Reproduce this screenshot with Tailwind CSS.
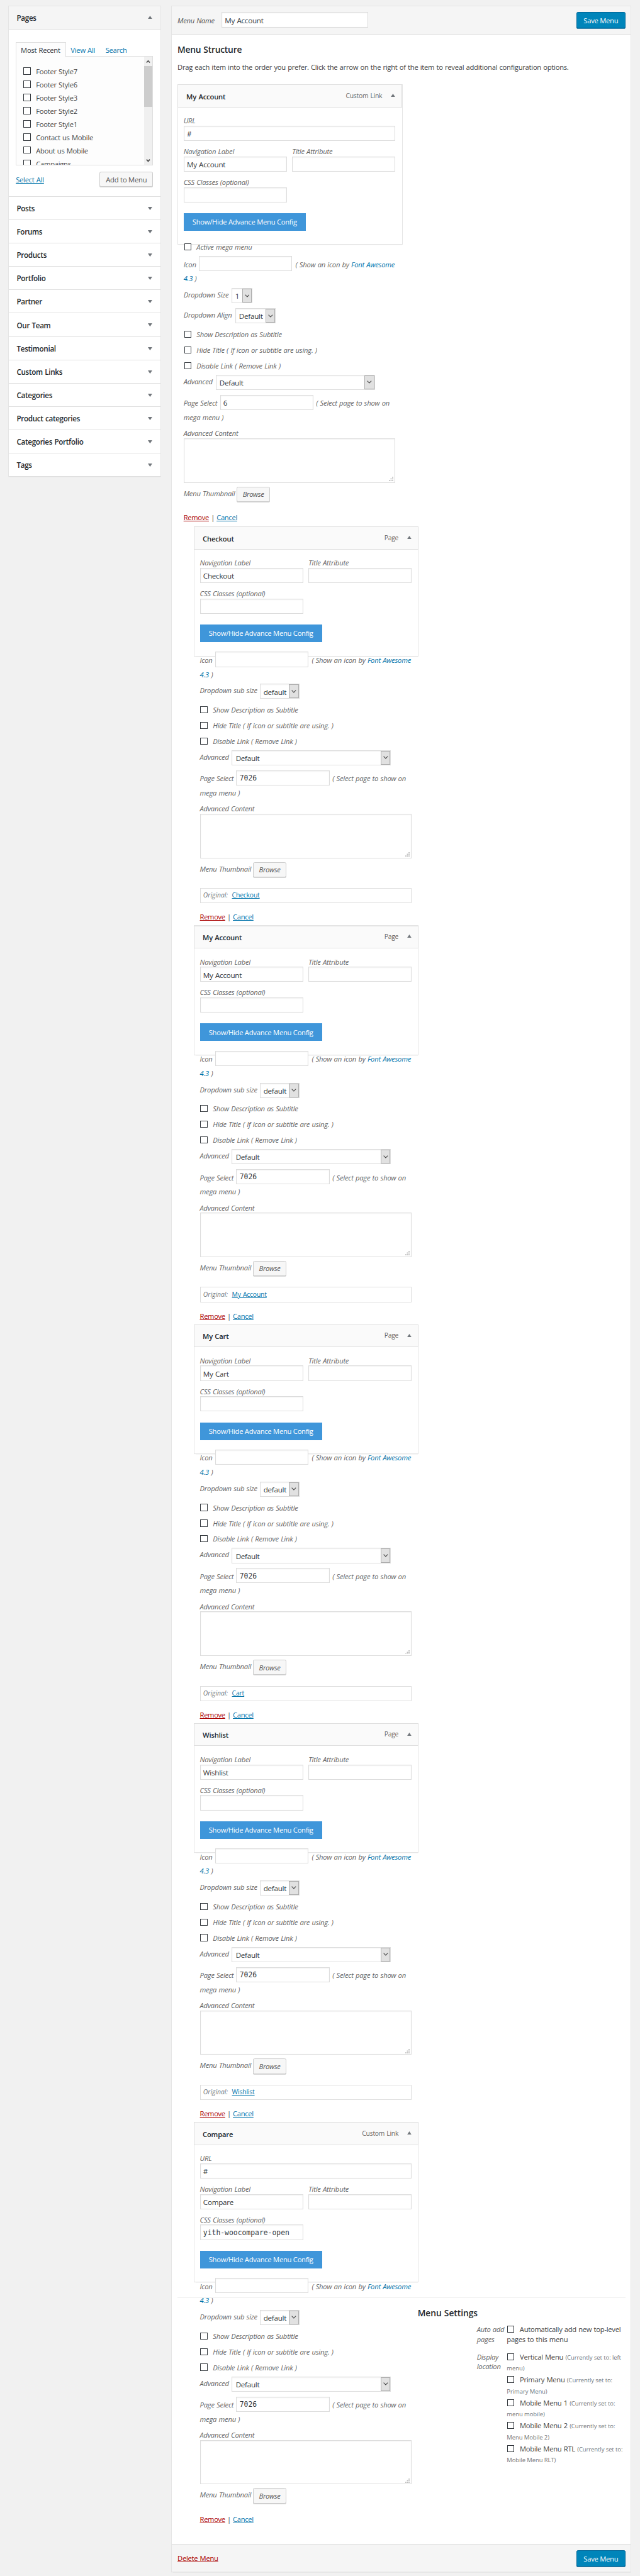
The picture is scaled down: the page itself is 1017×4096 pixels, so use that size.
<!DOCTYPE html>
<html lang="en">
<head>
<meta charset="utf-8">
<title>Menus</title>
<script src="https://cdn.jsdelivr.net/npm/@tailwindcss/browser@4"></script>
</head>
<body class="bg-[#f1f1f1] overflow-x-hidden">
<div class="[zoom:0.8635] relative h-[4743px] w-[1177px] overflow-hidden pl-[15px] pt-[10px] flex items-start gap-[19.5px] font-['Open_Sans',sans-serif] text-[13px] leading-[18px] tracking-[-0.3px] [word-spacing:0.7px] text-[#444]">

  <aside id="sidebar" class="w-[281px] shrink-0 bg-white border border-[#e5e5e5] shadow-[0_1px_1px_rgba(0,0,0,.04)]">
    <div class="h-[43px] bg-[#f5f5f5] border-b border-[#dfdfdf] flex items-center justify-between pl-[14.5px] pr-[15px]">
      <h3 class="text-[13.5px] font-semibold tracking-[-0.35px] text-[#23282d] mt-[2px]">Pages</h3>
      <svg class="w-[8px] h-[6px]" viewBox="0 0 8 6"><path d="M4 0L8 6H0z" fill="#72777c"/></svg>
    </div>
    <div class="h-[307px] px-[13px] pt-[24px]">
      <div class="flex h-[26px] items-stretch">
        <div class="w-[92px] h-[27px] relative z-10 bg-[#fdfdfd] border border-b-0 border-[#dfdfdf] pl-[8px] pt-[4px] text-[#32373c]">Most Recent</div>
        <div class="pl-[9px] pt-[5px] w-[73px] text-[#0073aa]">View All</div>
        <div class="pt-[5px] text-[#0073aa]">Search</div>
      </div>
      <div class="h-[202px] -mt-[1px] bg-[#fdfdfd] border border-[#dfdfdf] flex overflow-hidden">
        <div id="pages" class="grow pl-[13px] pt-[14.5px]"></div>
        <div class="w-[16px] bg-[#f0f0f0] pr-[1px] flex flex-col">
          <svg class="w-[15px] h-[17px]" viewBox="0 0 15 17"><path d="M4.5 11L7.5 7.8L10.5 11" fill="none" stroke="#505050" stroke-width="2"/></svg>
          <div class="h-[76px] bg-[#cdcdcd]"></div>
          <svg class="w-[15px] h-[17px] mt-auto" viewBox="0 0 15 17"><path d="M4.5 6.5L7.5 9.7L10.5 6.5" fill="none" stroke="#505050" stroke-width="2"/></svg>
        </div>
      </div>
      <div class="mt-[11px] flex items-center justify-between">
        <a class="mt-[2px] text-[#0073aa] underline">Select All</a>
        <button class="h-[28px] w-[98.5px] rounded-[3px] bg-[#f7f7f7] border border-[#ccc] shadow-[0_1px_0_#ccc] text-[#555] tracking-[-0.25px] pt-[1px]">Add to Menu</button>
      </div>
    </div>
    <div id="panels" class="border-t border-[#dfdfdf] -mb-[1px]"></div>
  </aside>

  <main class="relative w-[846px] h-[4727px] shrink-0 bg-white border border-[#e5e5e5] shadow-[0_1px_1px_rgba(0,0,0,.04)] flex flex-col">
    <header class="h-[52px] shrink-0 bg-[#f5f5f5] border-b border-[#dfdfdf] flex items-center pl-[10px] pr-[9.5px]">
      <label class="w-[81px] mt-[2px] italic text-[#555]">Menu Name</label>
      <div class="h-[28px] w-[270px] bg-white border border-[#ddd] shadow-[inset_0_1px_2px_rgba(0,0,0,.07)] pl-[5px] pt-[5px] text-[13.5px] text-[#32373c]">My Account</div>
      <button class="ml-auto h-[30px] w-[90px] rounded-[3px] bg-[#0085ba] border border-[#006799] shadow-[0_1px_0_#006799] text-white pt-[2px]">Save Menu</button>
    </header>
    <section class="grow pl-[10px]">
      <h3 class="mt-[17px] h-[22px] text-[16px] leading-[22px] font-semibold tracking-[-0.25px] text-[#23282d]">Menu Structure</h3>
      <p class="mt-[12px] mb-[23.5px] h-[18px]">Drag each item into the order you prefer. Click the arrow on the right of the item to reveal additional configuration options.</p>
      <div id="items"></div>
    </section>
    <footer class="h-[51px] shrink-0 bg-[#f5f5f5] border-t border-[#dfdfdf] flex items-center pl-[10px] pr-[9.5px]">
      <a class="text-[#a00] underline">Delete Menu</a>
      <button class="ml-auto h-[30px] w-[90px] rounded-[3px] bg-[#0085ba] border border-[#006799] shadow-[0_1px_0_#006799] text-white pt-[2px]">Save Menu</button>
    </footer>

    <!-- settings panel overlaps the last menu item -->
    <div class="absolute left-[10px] top-[4219px] w-[825px] border-t border-[#eee] pl-[442px] pt-[16px]">
      <h3 class="text-[16px] leading-[22px] font-semibold tracking-[-0.05px] text-[#23282d]">Menu Settings</h3>
      <div class="mt-[11px] pl-[109px] grid grid-cols-[55px_1fr] text-[#444]">
        <div class="italic text-[#666] h-[50.5px]">Auto add<br>pages</div>
        <div class="leading-[18.5px] whitespace-nowrap"><span class="inline-block size-[13px] border border-[#32373c] bg-white align-[-1.5px] ml-[1px] mr-[6px]"></span> Automatically add new top-level<br>pages to this menu</div>
        <div class="italic text-[#666]">Display<br>location</div>
        <div id="locations" class="leading-[19px]"></div>
      </div>
    </div>
  </main>
</div>

<script>
const box = '<span class="shrink-0 inline-block size-[13px] border border-[#32373c] bg-white"></span>';

document.getElementById('pages').innerHTML =
  ['Footer Style7','Footer Style6','Footer Style3','Footer Style2','Footer Style1','Contact us Mobile','About us Mobile','Campaigns']
  .map(t => `<div class="h-[24.3px] flex items-center gap-[10px] whitespace-nowrap">${box}<span class="mt-[2px]">${t}</span></div>`).join('');

document.getElementById('panels').innerHTML =
  ['Posts','Forums','Products','Portfolio','Partner','Our Team','Testimonial','Custom Links','Categories','Product categories','Categories Portfolio','Tags']
  .map(t => `<div class="h-[43px] border-b border-[#dfdfdf] flex items-center justify-between pl-[14.5px] pr-[15px]">
    <h3 class="text-[13.5px] font-semibold tracking-[-0.35px] text-[#23282d] mt-[2px]">${t}</h3>
    <svg class="w-[8px] h-[6px] mt-[1px]" viewBox="0 0 8 6"><path d="M0 0H8L4 6z" fill="#72777c"/></svg></div>`).join('');

document.getElementById('locations').innerHTML =
  [['Vertical Menu','left<br>menu'],['Primary Menu','<br>Primary Menu'],['Mobile Menu 1','<br>menu mobile'],['Mobile Menu 2','<br>Menu Mobile 2'],['Mobile Menu RTL','<br>Mobile Menu RLT']]
  .map(([n, s]) => `<div class="h-[42.3px] whitespace-nowrap"><span class="inline-block size-[13px] border border-[#32373c] bg-white align-[-1.5px] ml-[1px] mr-[10px]"></span>${n} <span class="text-[11px] tracking-[-0.1px] [word-spacing:0px] text-[#72777c]">(Currently set to: ${s})</span></div>`).join('');

const input = (w, v = '', mono = false) =>
  `<div class="${w} h-[28px] shrink-0 bg-white border border-[#ddd] shadow-[inset_0_1px_2px_rgba(0,0,0,.07)] pl-[5px] text-[#32373c] not-italic ${mono ? "font-['DejaVu_Sans_Mono',monospace] text-[13.2px] tracking-[0px] pt-[5px]" : 'text-[13.5px] tracking-[-0.3px] pt-[5px]'}">${v}</div>`;
const select = (w, v) =>
  `<div class="${w} h-[28px] shrink-0 bg-white border border-[#ddd] shadow-[inset_0_1px_2px_rgba(0,0,0,.07)] pl-[6px] flex justify-between text-[13.5px] tracking-[-0.3px] text-[#32373c] not-italic"><span class="pt-[5px]">${v}</span>
   <span class="w-[18px] bg-[#e1e1e1] border border-[#adadad] flex items-center justify-center"><svg class="w-[9px] h-[6px]" viewBox="0 0 9 6"><path d="M.7.8L4.5 4.6L8.3.8" fill="none" stroke="#444" stroke-width="1.2"/></svg></span></div>`;
const field = (label, ctrl) => `<div><div class="h-[17px] leading-[16px]">${label}</div>${ctrl}</div>`;
const check = t => `<div class="h-[28.8px] flex items-center gap-[10px] pl-[1px]">${box}<span class="mt-[1px]">${t}</span></div>`;

function item(o) {
  const custom = o.kind === 'Custom Link';
  return `
<article class="w-[414px] ${o.top ? 'h-[814px]' : 'h-[734.5px] ml-[30px]'} italic tracking-[-0.25px] text-[#666]">
  <div class="${custom ? 'h-[295px]' : 'h-[239px]'} border border-[#e5e5e5] shadow-[0_1px_1px_rgba(0,0,0,.04)]">
    <div class="-m-[1px] h-[42px] bg-[#fafafa] border border-[#dfdfdf] flex items-center pl-[15px] pr-[12px] not-italic">
      <h4 class="grow text-[13px] font-semibold tracking-[-0.2px] text-[#23282d] mt-[2px]">${o.title}</h4>
      <span class="text-[12px] tracking-[-0.27px]">${o.kind}</span>
      <svg class="w-[8px] h-[6px] ml-[16px] -mt-[2px]" viewBox="0 0 8 6"><path d="M4 0L8 6H0z" fill="#72777c"/></svg>
    </div>
    <div class="px-[10px] pt-[18px] w-[411px]">
      ${custom ? `<div class="mb-[11.5px]">${field('URL', input('w-[390px]', '#'))}</div>` : ''}
      <div class="flex gap-[10px] mb-[11.5px]">${field('Navigation Label', input('w-[190px]', o.title))}${field('Title Attribute', input('w-[190px]'))}</div>
      ${field('CSS Classes (optional)', input('w-[190px]', o.css || '', true))}
      <button class="mt-[20px] block h-[32.5px] w-[225px] bg-[#3f96da] text-white not-italic tracking-[-0.3px]">Show/Hide Advance Menu Config</button>
      ${o.top ? `<div class="mt-[14.5px] h-[29px] flex items-center gap-[10px] pl-[1px]">${box}<span class="mt-[2px]">Active mega menu</span></div>` : ''}
      <div class="${o.top ? 'mt-[3px]' : 'mt-[17.5px]'} h-[28px] flex items-center whitespace-nowrap"><span class="w-[28px] mt-[3px]">Icon</span>${input('w-[172px]')}<span class="ml-[6px] mt-[3px]">( Show an icon by <a class="text-[#0073aa]">Font Awesome</a></span></div>
      <div class="h-[26px] leading-[28px]"><a class="text-[#0073aa]">4.3</a> )</div>
      ${o.top
        ? `<div class="mt-[5px] h-[28px] flex items-center"><span class="w-[88px] -mt-[3px]">Dropdown Size</span>${select('w-[39px]', '1')}</div>
           <div class="mt-[9px] h-[28px] flex items-center"><span class="w-[95px] -mt-[3px]">Dropdown Align</span>${select('w-[75px]', 'Default')}</div>`
        : `<div class="mt-[5px] h-[28px] flex items-center"><span class="w-[110px] -mt-[3px]">Dropdown sub size</span>${select('w-[73px]', 'default')}</div>`}
      <div class="mt-[5.5px]">${check('Show Description as Subtitle')}${check('Hide Title ( If icon or subtitle are using. )')}${check('Disable Link ( Remove Link )')}</div>
      <div class="mt-[2.5px] h-[28px] flex items-center"><span class="w-[59px] -mt-[3px]">Advanced</span>${select('w-[293px]', 'Default')}</div>
      <div class="mt-[9px] h-[28px] flex items-center whitespace-nowrap"><span class="w-[67px] mt-[3px]">Page Select</span>${input('w-[172px]', o.page, o.page !== '6')}<span class="ml-[5px] mt-[3px]">( Select page to show on</span></div>
      <div class="h-[28px] leading-[28px]">mega menu )</div>
      <div class="mt-[6px] h-[18px] leading-[18px]">Advanced Content</div>
      <div class="relative h-[82px] w-[390px] bg-white border border-[#ddd] shadow-[inset_0_1px_2px_rgba(0,0,0,.07)]">
        <svg class="absolute right-[3px] bottom-[2px] size-[8px]" viewBox="0 0 8 8" fill="#bbb"><path d="M6 0h2v2H6zM3 3h2v2H3zM6 3h2v2H6zM0 6h2v2H0zM3 6h2v2H3zM6 6h2v2H6z"/></svg>
      </div>
      <div class="mt-[7px] h-[28px] flex items-center"><span class="w-[98px] -mt-[3px]">Menu Thumbnail</span><button class="h-[28px] w-[61px] rounded-[3px] bg-[#f7f7f7] border border-[#ccc] shadow-[0_1px_0_#ccc] italic tracking-[-0.4px] text-[#555]">Browse</button></div>
      ${o.orig ? `<div class="mt-[20px] h-[28px] w-[390px] border border-[#ddd] pl-[5px] flex items-center text-[12px]"><span class="w-[53px] tracking-[0px] text-[#72777c]">Original:</span><a class="not-italic text-[#0073aa] underline tracking-[-0.2px]">${o.orig}</a></div>` : ''}
      <div class="${o.orig ? 'mt-[15px]' : 'mt-[19px]'} h-[20px] leading-[20px] not-italic tracking-[-0.38px] text-[#444]"><a class="text-[#a00] underline">Remove</a> | <a class="text-[#0073aa] underline">Cancel</a></div>
    </div>
  </div>
</article>`;
}

document.getElementById('items').innerHTML = [
  { title: 'My Account', kind: 'Custom Link', top: true, page: '6' },
  { title: 'Checkout', kind: 'Page', page: '7026', orig: 'Checkout' },
  { title: 'My Account', kind: 'Page', page: '7026', orig: 'My Account' },
  { title: 'My Cart', kind: 'Page', page: '7026', orig: 'Cart' },
  { title: 'Wishlist', kind: 'Page', page: '7026', orig: 'Wishlist' },
  { title: 'Compare', kind: 'Custom Link', css: 'yith-woocompare-open', page: '7026' },
].map(item).join('');
</script>
</body>
</html>
